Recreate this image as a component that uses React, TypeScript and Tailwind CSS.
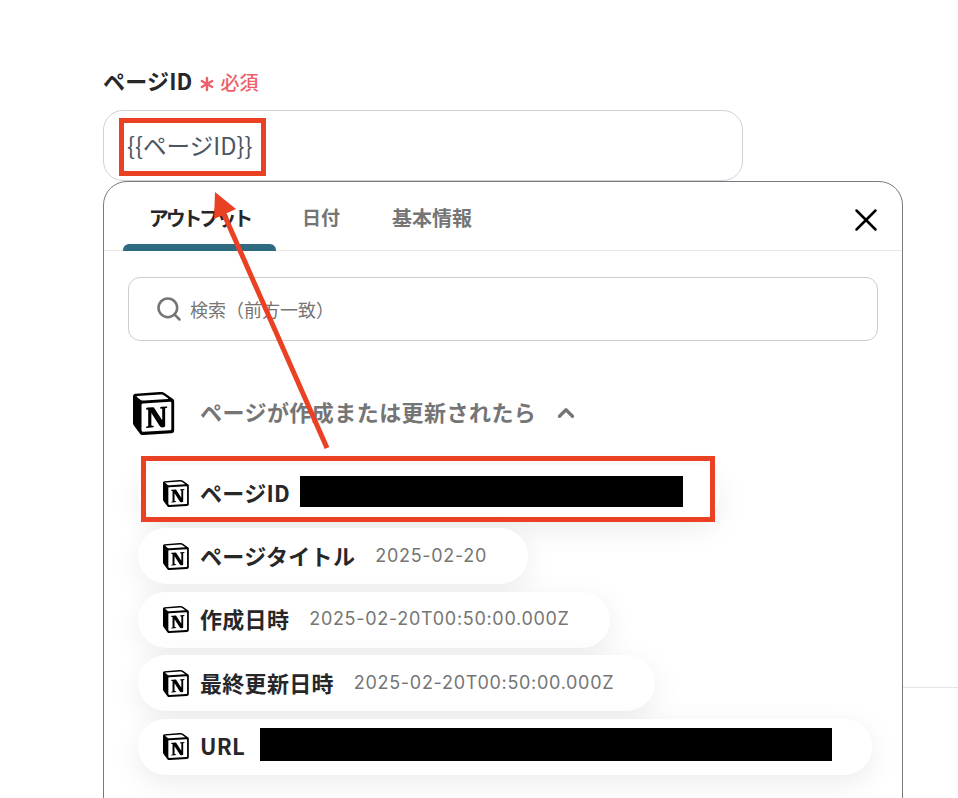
import { Asterisk, ChevronUp, Search, X } from "lucide-react";

function NotionIcon({ className }: { className: string }) {
  return (
    <svg className={className} viewBox="0 0 100 100" fill="none">
      <path
        d="M6.017 4.313l55.333 -4.087c6.797 -0.583 8.543 -0.19 12.817 2.917l17.663 12.443c2.913 2.14 3.883 2.723 3.883 5.053v68.243c0 4.277 -1.553 6.807 -6.99 7.193L24.467 99.967c-4.08 0.193 -6.023 -0.39 -8.16 -3.113L3.3 79.94c-2.333 -3.113 -3.3 -5.443 -3.3 -8.167V11.113c0 -3.497 1.553 -6.413 6.017 -6.8z"
        fill="#fff"
      />
      <path
        fillRule="evenodd"
        clipRule="evenodd"
        d="M61.35 0.227l-55.333 4.087C1.553 4.7 0 7.617 0 11.113v60.66c0 2.723 0.967 5.053 3.3 8.167l13.007 16.913c2.137 2.723 4.08 3.307 8.16 3.113l64.257 -3.89c5.433 -0.387 6.99 -2.917 6.99 -7.193V20.64c0 -2.21 -0.873 -2.847 -3.443 -4.733L74.167 3.143c-4.273 -3.107 -6.02 -3.5 -12.817 -2.917zM25.92 19.523c-5.247 0.353 -6.437 0.433 -9.417 -1.99L8.927 11.507c-0.77 -0.78 -0.383 -1.753 1.557 -1.947l53.193 -3.887c4.467 -0.39 6.793 1.167 8.54 2.527l9.123 6.61c0.39 0.197 1.36 1.36 0.193 1.36l-54.933 3.307 -0.68 0.047zM19.803 88.3V30.367c0 -2.53 0.777 -3.697 3.103 -3.893L86 22.78c2.14 -0.193 3.107 1.167 3.107 3.693v57.547c0 2.53 -0.39 4.67 -3.883 4.863l-60.377 3.5c-3.493 0.193 -5.043 -0.97 -5.043 -4.083zm59.6 -54.827c0.387 1.75 0 3.5 -1.75 3.7l-2.91 0.577v42.773c-2.527 1.36 -4.853 2.137 -6.797 2.137 -3.107 0 -3.883 -0.973 -6.21 -3.887l-19.03 -29.94v28.967l6.02 1.363s0 3.5 -4.857 3.5l-13.39 0.777c-0.39 -0.78 0 -2.723 1.357 -3.11l3.497 -0.97v-38.3L30.48 40.667c-0.39 -1.75 0.58 -4.277 3.3 -4.473l14.367 -0.967 19.8 30.327v-26.83l-5.047 -0.58c-0.39 -2.143 1.163 -3.7 3.103 -3.89l13.4 -0.78z"
        fill="#000"
      />
    </svg>
  );
}

function Redacted({ className }: { className: string }) {
  return <div className={`bg-black ${className}`} />;
}

function OutputPill({ label, value, children, className }: { label: string; value?: string; children?: React.ReactNode; className: string }) {
  return (
    <div className={`flex h-[56px] items-center rounded-[28px] bg-white pl-[25px] shadow-[0_8px_30px_rgba(0,0,0,0.08)] ${className}`}>
      <NotionIcon className="mr-[10px] h-[27px] w-[27px] shrink-0" />
      <span className="mb-[3px] text-[22px] leading-none font-bold tracking-[0.3px] whitespace-nowrap text-[#27272a]">{label}</span>
      {value && <span className="mb-[2px] ml-[20px] font-['Inter','Noto_Sans',sans-serif] text-[18px] tracking-[0.7px] whitespace-nowrap text-[#757575]">{value}</span>}
      {children}
    </div>
  );
}

export default function App() {
  return (
    <div className="relative h-[798px] w-[958px] overflow-hidden bg-white font-['Noto_Sans_CJK_JP','Noto_Sans',sans-serif]">
      <div className="absolute top-[687px] left-[903px] h-px w-[55px] bg-[#e5e5e5]" />

      <div className="pt-[66px] pl-[103px]">
        {/* Field label */}
        <div className="flex h-[32px] items-center">
          <span className="mb-[3px] text-[22px] font-bold tracking-[0.2px] whitespace-nowrap text-[#27272a]">ページID</span>
          <Asterisk className="ml-[2px] h-[24px] w-[24px] shrink-0 translate-y-[2px] text-[#ef5f6b]" strokeWidth={2.4} />
          <span className="ml-[2px] text-[19px] font-medium text-[#ef5f6b]">必須</span>
        </div>

        {/* Field input */}
        <div className="mt-[12px] flex h-[71px] w-[640px] items-center rounded-[20px] border border-[#ccd3db] pl-[23px] text-[23.6px] text-[#4b5563]">
          {"{{ページID}}"}
        </div>

        {/* Output panel */}
        <div className="h-[640px] w-[800px] rounded-[24px] border border-[#7a7a7a] bg-white">
          <div className="relative flex h-[69px] border-b border-[#e8e8e8] pl-[19px]">
            <div className="relative w-[153px] pt-[21px] text-center text-[20px] font-bold tracking-[-3.1px] text-[#27272a]">
              アウトプット
              <div className="absolute right-0 -bottom-px left-0 h-[7px] rounded-t-[6px] bg-[#2e6a80]" />
            </div>
            <div className="ml-[26px] pt-[21px] text-[19px] font-bold text-[#757575]">日付</div>
            <div className="ml-[52px] pt-[21px] text-[20px] font-bold text-[#757575]">基本情報</div>
            <X className="absolute top-[19px] right-[17px] h-[38px] w-[38px] text-black" strokeWidth={1.6} />
          </div>

          <div className="mt-[26px] ml-[24px] flex h-[64px] w-[750px] items-center rounded-[12px] border border-[#cccccc] pl-[26px]">
            <Search className="h-[28px] w-[28px] text-[#757575]" strokeWidth={2.2} />
            <span className="ml-[7px] text-[18px] text-[#757575]">検索（前方一致）</span>
          </div>

          <div className="mt-[50px] ml-[29px] flex h-[44px] items-center">
            <NotionIcon className="h-[43px] w-[43px]" />
            <span className="mb-[3px] ml-[24px] text-[22px] font-bold tracking-[0.45px] text-[#757575]">ページが作成または更新されたら</span>
            <ChevronUp className="ml-[17px] h-[26px] w-[26px] text-[#757575]" strokeWidth={3} />
          </div>

          <div className="mt-[30px] ml-[34px] flex flex-col gap-[7.4px]">
            <OutputPill label="ページID" className="w-[582px]">
              <Redacted className="mb-[4px] ml-[10px] h-[31px] w-[383px]" />
            </OutputPill>
            <OutputPill label="ページタイトル" value="2025-02-20" className="w-[390px]" />
            <OutputPill label="作成日時" value="2025-02-20T00:50:00.000Z" className="w-[472px]" />
            <OutputPill label="最終更新日時" value="2025-02-20T00:50:00.000Z" className="w-[517px]" />
            <OutputPill label="URL" className="w-[734px]">
              <Redacted className="mb-[5px] ml-[15px] h-[33px] w-[572px]" />
            </OutputPill>
          </div>
        </div>
      </div>

      {/* Annotations */}
      <div className="absolute top-[118px] left-[119px] h-[58px] w-[147px] border-[5px] border-[#ea4023]" />
      <div className="absolute top-[456px] left-[141px] h-[66px] w-[574px] border-[5px] border-[#ea4023]" />
      <svg className="absolute top-0 left-0 h-[798px] w-[958px]" viewBox="0 0 958 798" fill="none">
        <path d="M327 448 L223 212" stroke="#ea4023" strokeWidth="5" />
        <path d="M215 192 L214 219 L236 209 Z" fill="#ea4023" />
      </svg>
    </div>
  );
}
